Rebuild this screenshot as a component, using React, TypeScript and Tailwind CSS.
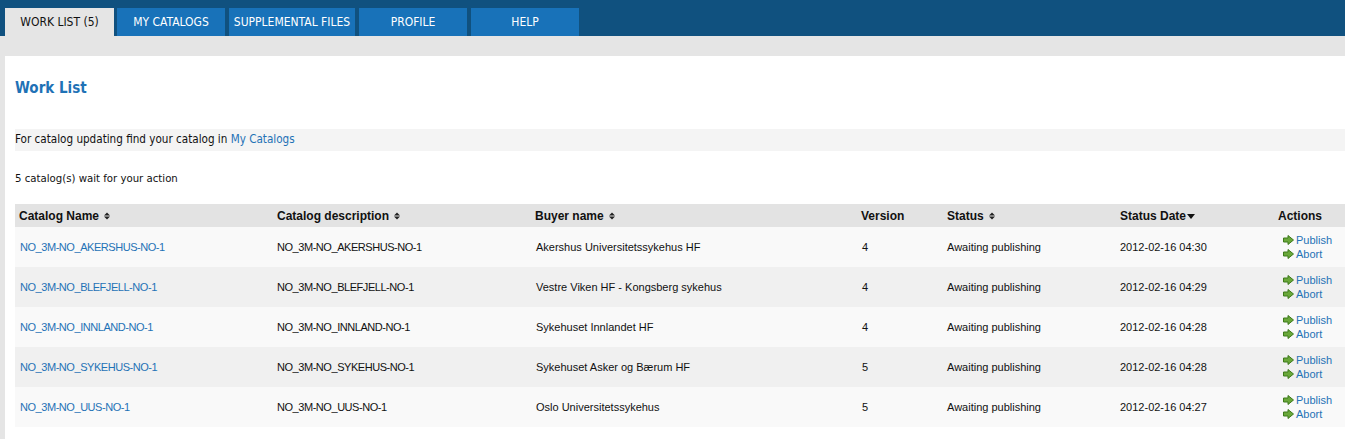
import React from 'react';

const tabs = ['WORK LIST (5)', 'MY CATALOGS', 'SUPPLEMENTAL FILES', 'PROFILE', 'HELP'];
const tabStyles = ['w-[109px] ml-[5px]', 'w-[108px] ml-[3px]', 'w-[126px] ml-[4px]', 'w-[108px] ml-[4px]', 'w-[108px] ml-[4px]'];

const rows = [
  { name: 'NO_3M-NO_AKERSHUS-NO-1', buyer: 'Akershus Universitetssykehus HF', version: '4', date: '2012-02-16 04:30' },
  { name: 'NO_3M-NO_BLEFJELL-NO-1', buyer: 'Vestre Viken HF - Kongsberg sykehus', version: '4', date: '2012-02-16 04:29' },
  { name: 'NO_3M-NO_INNLAND-NO-1', buyer: 'Sykehuset Innlandet HF', version: '4', date: '2012-02-16 04:28' },
  { name: 'NO_3M-NO_SYKEHUS-NO-1', buyer: 'Sykehuset Asker og Bærum HF', version: '5', date: '2012-02-16 04:28' },
  { name: 'NO_3M-NO_UUS-NO-1', buyer: 'Oslo Universitetssykehus', version: '5', date: '2012-02-16 04:27' },
];

const tahoma = { fontFamily: '"DejaVu Sans Condensed", "DejaVu Sans", sans-serif' };

const SortIcon = () => (
  <svg width="6" height="8" viewBox="0 0 6 8" className="inline-block ml-[5px] align-middle">
    <path d="M0 3.5 L3 0.5 L6 3.5 Z M0 4.5 L3 7.5 L6 4.5 Z" fill="#222" />
  </svg>
);

const DownIcon = () => (
  <svg width="8" height="5" viewBox="0 0 8 5" className="inline-block ml-[1px] align-middle">
    <path d="M0 0 L8 0 L4 5 Z" fill="#111" />
  </svg>
);

const GreenArrow = () => (
  <svg width="11" height="10" viewBox="0 0 11 10" className="inline-block mr-[2px]">
    <path d="M0.5 3 L5 3 L5 0.5 L10.5 5 L5 9.5 L5 7 L0.5 7 Z" fill="#6aa83a" stroke="#3d7a1a" strokeWidth="1" strokeLinejoin="round" />
  </svg>
);

const Header = ({ children, w }: { children: React.ReactNode; w: string }) => (
  <th className={`${w} text-left font-bold text-[12px] px-[4px] h-[23px] text-[#111]`}>{children}</th>
);

export default function App() {
  return (
    <div className="min-h-screen bg-white" style={{ fontFamily: '"Liberation Sans", Arial, sans-serif' }}>
      <div className="bg-[#10517f] h-[36px] flex items-end">
        {tabs.map((t, i) => (
          <div
            key={t}
            className={`${tabStyles[i]} h-[28px] flex items-center justify-center text-[12px] ${
              i === 0 ? 'bg-[#e5e5e5] text-[#111]' : 'bg-[#1872b9] text-white'
            }`}
            style={tahoma}
          >
            {t}
          </div>
        ))}
      </div>
      <div className="bg-[#e5e5e5] h-[20px]" />
      <div className="border-l-[5px] border-[#e5e5e5] pl-[10px] pb-[12px]">
        <h1 className="text-[#1f72b6] font-bold text-[15px] pt-[21px] h-[73px]" style={tahoma}>
          Work List
        </h1>
        <div className="bg-[#f4f4f4] h-[22px] flex items-center text-[11.6px] text-[#111]" style={tahoma}>
          For catalog updating find your catalog in&nbsp;<span className="text-[#1f72b6]">My Catalogs</span>
        </div>
        <div className="h-[53px] pt-[20px] text-[11.3px] text-[#111]" style={tahoma}>
          5 catalog(s) wait for your action
        </div>
        <table className="w-full border-collapse table-fixed">
          <thead>
            <tr className="bg-[#e3e3e3]">
              <Header w="w-[258px]">Catalog Name<SortIcon /></Header>
              <Header w="w-[258px]">Catalog description<SortIcon /></Header>
              <Header w="w-[326px]">Buyer name<SortIcon /></Header>
              <Header w="w-[86px]">Version</Header>
              <Header w="w-[173px]">Status<SortIcon /></Header>
              <Header w="w-[158px]">Status Date<DownIcon /></Header>
              <Header w="w-auto">Actions</Header>
            </tr>
          </thead>
          <tbody>
            {rows.map((r, i) => (
              <tr key={r.name} className={`h-[40px] text-[11px] text-[#111] ${i % 2 === 0 ? 'bg-[#f9f9f9]' : 'bg-[#f0f0f0]'}`}>
                <td className="px-[5px] text-[#1f72b6] tracking-[-0.45px]">{r.name}</td>
                <td className="px-[4px] tracking-[-0.45px]">{r.name}</td>
                <td className="px-[5px]">{r.buyer}</td>
                <td className="px-[5px]">{r.version}</td>
                <td className="px-[4px]">Awaiting publishing</td>
                <td className="px-[4px]">{r.date}</td>
                <td className="px-[9px]">
                  <div className="flex flex-col leading-[14px] text-[#1f72b6]">
                    <span className="flex items-center"><GreenArrow />Publish</span>
                    <span className="flex items-center"><GreenArrow />Abort</span>
                  </div>
                </td>
              </tr>
            ))}
          </tbody>
        </table>
      </div>
    </div>
  );
}
